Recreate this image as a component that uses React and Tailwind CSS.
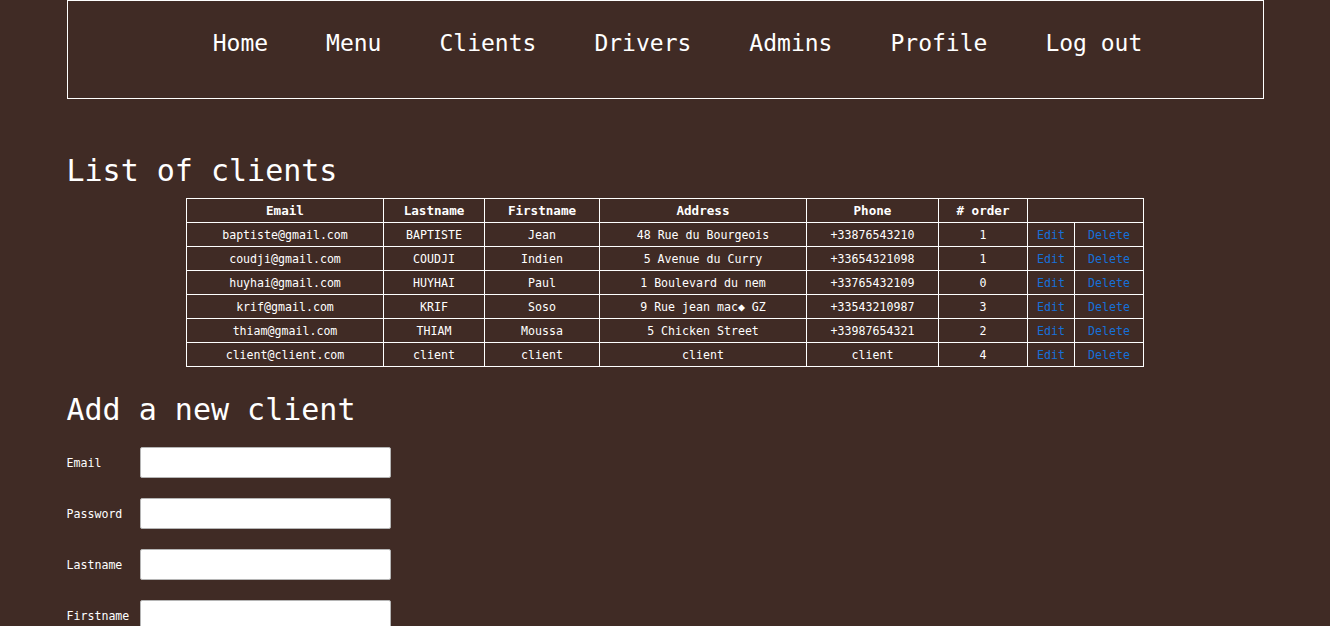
import React from "react";

const navItems = ["Home", "Menu", "Clients", "Drivers", "Admins", "Profile", "Log out"];

const clients = [
  ["baptiste@gmail.com", "BAPTISTE", "Jean", "48 Rue du Bourgeois", "+33876543210", "1"],
  ["coudji@gmail.com", "COUDJI", "Indien", "5 Avenue du Curry", "+33654321098", "1"],
  ["huyhai@gmail.com", "HUYHAI", "Paul", "1 Boulevard du nem", "+33765432109", "0"],
  ["krif@gmail.com", "KRIF", "Soso", "9 Rue jean mac\u25C6 GZ", "+33543210987", "3"],
  ["thiam@gmail.com", "THIAM", "Moussa", "5 Chicken Street", "+33987654321", "2"],
  ["client@client.com", "client", "client", "client", "client", "4"],
];

const widths = ["w-[197px]", "w-[101px]", "w-[115px]", "w-[207px]", "w-[132px]", "w-[89px]", "w-[47px]", "w-[69px]"];
const headers = ["Email", "Lastname", "Firstname", "Address", "Phone", "# order"];

export default function App() {
  return (
    <div className="min-h-[626px] bg-[#402b25] text-white font-['DejaVu_Sans_Mono',monospace]">
      <div className="w-[1197px] mx-auto">
        <nav className="h-[99px] border border-white flex items-center justify-center gap-[58px] pl-[25px] pb-[13px]">
          {navItems.map((n) => (
            <a key={n} className="text-[23px] leading-none whitespace-pre">{n}</a>
          ))}
        </nav>

        <h1 className="mt-[57px] text-[30px] leading-none font-normal">List of clients</h1>

        <table className="mt-[12px] mx-auto table-fixed border-collapse text-[11.6px] w-[957px]">
          <colgroup>
            {widths.map((w, i) => (
              <col key={i} className={w} />
            ))}
          </colgroup>
          <thead>
            <tr className="h-[24px]">
              {headers.map((h) => (
                <th key={h} className="border border-white font-bold text-[12.6px] text-center p-0 pt-[1px]">{h}</th>
              ))}
              <th colSpan={2} className="border border-white p-0"></th>
            </tr>
          </thead>
          <tbody>
            {clients.map((r, i) => (
              <tr key={i} className="h-[24px]">
                {r.map((c, j) => (
                  <td key={j} className="border border-white text-center p-0 pt-[2px] whitespace-pre">{c}</td>
                ))}
                <td className="border border-white text-center p-0 pt-[2px] text-[#1670d8]">Edit</td>
                <td className="border border-white text-center p-0 pt-[2px] text-[#1670d8]">Delete</td>
              </tr>
            ))}
          </tbody>
        </table>

        <h2 className="mt-[28px] text-[30px] leading-none font-normal">Add a new client</h2>

        <form className="mt-[22px] flex flex-col gap-[20px]">
          {["Email", "Password", "Lastname", "Firstname"].map((l) => (
            <div key={l} className="flex items-center">
              <label className="w-[73px] text-[11.6px] pt-[2px]">{l}</label>
              <input className="w-[251px] h-[31px] bg-white border border-[#b5b5b5] rounded-[2px]" />
            </div>
          ))}
        </form>
      </div>
    </div>
  );
}
